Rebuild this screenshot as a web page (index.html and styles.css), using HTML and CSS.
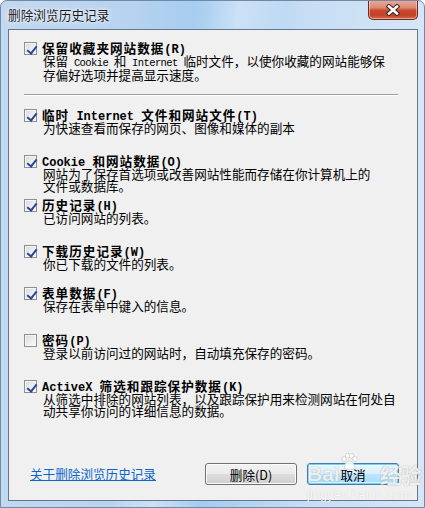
FILE: index.html
```html
<!DOCTYPE html>
<html lang="zh-CN">
<head>
    <meta charset="UTF-8">
    <meta name="viewport" content="width=device-width, initial-scale=1.0">
    <title>删除浏览历史记录</title>
    <link rel="stylesheet" href="styles.css">
</head>
<body>
    <div class="window">
        <!-- 标题栏 -->
        <div class="titlebar">
            <span class="title">删除浏览历史记录</span>
            <button class="close-btn" aria-label="关闭">
                <svg width="16" height="12" viewBox="0 0 16 12">
                    <path d="M4 2.5 L12 9.5 M12 2.5 L4 9.5" stroke="#3a2622" stroke-width="4.6" stroke-linecap="square" fill="none"/>
                    <path d="M4 2.5 L12 9.5 M12 2.5 L4 9.5" stroke="#ffffff" stroke-width="2.6" stroke-linecap="square" fill="none"/>
                </svg>
            </button>
        </div>

        <!-- 内容区 -->
        <div class="client">
            <div class="item item-first">
                <div class="item-head">
                    <span class="check on"></span>
                    <span class="item-title">保留收藏夹网站数据<span class="latin">(R)</span></span>
                </div>
                <p class="item-desc">保留<span class="latin"> Cookie </span>和<span class="latin"> Internet </span>临时文件，以使你收藏的网站能够保<br>存偏好选项并提高显示速度。</p>
            </div>

            <div class="separator"></div>

            <div class="item">
                <div class="item-head">
                    <span class="check on"></span>
                    <span class="item-title">临时<span class="latin"> Internet </span>文件和网站文件<span class="latin">(T)</span></span>
                </div>
                <p class="item-desc">为快速查看而保存的网页、图像和媒体的副本</p>
            </div>

            <div class="item item-cookie">
                <div class="item-head">
                    <span class="check on"></span>
                    <span class="item-title"><span class="latin">Cookie </span>和网站数据<span class="latin">(O)</span></span>
                </div>
                <p class="item-desc">网站为了保存首选项或改善网站性能而存储在你计算机上的<br>文件或数据库。</p>
            </div>

            <div class="item">
                <div class="item-head">
                    <span class="check on"></span>
                    <span class="item-title">历史记录<span class="latin">(H)</span></span>
                </div>
                <p class="item-desc">已访问网站的列表。</p>
            </div>

            <div class="item item-download">
                <div class="item-head">
                    <span class="check on"></span>
                    <span class="item-title">下载历史记录<span class="latin">(W)</span></span>
                </div>
                <p class="item-desc">你已下载的文件的列表。</p>
            </div>

            <div class="item item-form">
                <div class="item-head">
                    <span class="check on"></span>
                    <span class="item-title">表单数据<span class="latin">(F)</span></span>
                </div>
                <p class="item-desc">保存在表单中键入的信息。</p>
            </div>

            <div class="item">
                <div class="item-head">
                    <span class="check"></span>
                    <span class="item-title">密码<span class="latin">(P)</span></span>
                </div>
                <p class="item-desc">登录以前访问过的网站时，自动填充保存的密码。</p>
            </div>

            <div class="item item-last">
                <div class="item-head">
                    <span class="check on"></span>
                    <span class="item-title"><span class="latin">ActiveX </span>筛选和跟踪保护数据<span class="latin">(K)</span></span>
                </div>
                <p class="item-desc">从筛选中排除的网站列表，以及跟踪保护用来检测网站在何处自<br>动共享你访问的详细信息的数据。</p>
            </div>

            <!-- 底部按钮 -->
            <div class="footer">
                <a class="help-link" href="#">关于删除浏览历史记录</a>
                <div class="buttons">
                    <button class="btn">删除(D)</button>
                    <button class="btn btn-default">取消</button>
                </div>
            </div>
        </div>

        <!-- 水印 -->
        <div class="watermark">
            <div class="wm-logo">
                <span class="wm-bai">Bai</span>
                <svg class="wm-paw" width="18" height="18" viewBox="0 0 18 18">
                    <ellipse cx="4" cy="6" rx="2.2" ry="2.8" fill="#fff" stroke="#c9c9c9" stroke-width="0.8"/>
                    <ellipse cx="7.5" cy="2.8" rx="2.2" ry="2.6" fill="#fff" stroke="#c9c9c9" stroke-width="0.8"/>
                    <ellipse cx="11.5" cy="2.8" rx="2.2" ry="2.6" fill="#fff" stroke="#c9c9c9" stroke-width="0.8"/>
                    <ellipse cx="15" cy="6" rx="2.2" ry="2.8" fill="#fff" stroke="#c9c9c9" stroke-width="0.8"/>
                    <path d="M9.5 8 C6 8 4 12 4.5 14.5 C5 17 8 16 9.5 16 C11 16 14 17 14.5 14.5 C15 12 13 8 9.5 8 Z" fill="#fff" stroke="#c9c9c9" stroke-width="0.8"/>
                </svg>
                <span class="wm-jy">经验</span>
            </div>
            <div class="wm-url">jingyan.baidu.com</div>
        </div>
    </div>
</body>
</html>
```

FILE: styles.css
```css
* {
    margin: 0;
    padding: 0;
    box-sizing: border-box;
}

body {
    font-family: "Noto Sans CJK SC", "Noto Sans", sans-serif;
    font-size: 12.6px;
    color: #000000;
    background-color: #FFFFFF;
}

.window {
    position: relative;
    width: 425px;
    height: 508px;
    display: flex;
    flex-direction: column;
    padding: 0 6px 6px 7px;
    border: 1px solid #7189a6;
    border-radius: 7px 7px 0 0;
    overflow: hidden;
    background:
        linear-gradient(100deg, rgba(255, 255, 255, 0) 38%, rgba(255, 255, 255, 0.35) 47%, rgba(255, 255, 255, 0) 56%),
        linear-gradient(90deg, #c2d8ef 0%, #b7d3f0 30%, #a5ccef 48%, #c6ddf4 72%, #d6e6f6 100%);
}

/* 标题栏 */
.titlebar {
    display: flex;
    align-items: flex-start;
    height: 28px;
    flex-shrink: 0;
}

.title {
    padding-top: 6px;
    font-size: 12.7px;
    line-height: 16px;
    color: #1a1a1a;
    text-shadow: 0 0 6px rgba(255, 255, 255, 0.95), 0 0 2px #FFFFFF;
}

.close-btn {
    margin-left: auto;
    margin-top: -1px;
    width: 50px;
    height: 20px;
    display: flex;
    align-items: center;
    justify-content: center;
    border: 1px solid #6e2b1f;
    border-top: none;
    border-radius: 0 0 5px 5px;
    background: linear-gradient(180deg, #e9ab9a 0%, #dc8a74 40%, #c9492f 55%, #c2412a 80%, #d86a4c 100%);
    box-shadow: inset 0 0 0 1px rgba(255, 235, 225, 0.45);
}

/* 内容区 */
.client {
    flex: 1;
    display: flex;
    flex-direction: column;
    padding: 12px 18px 15px 15px;
    border: 1px solid #65778e;
    background-color: #F0F0F0;
}

.item {
    height: 46px;
    flex-shrink: 0;
}

.item-first,
.item-last {
    height: auto;
}

.item-cookie {
    height: 44px;
}

.item-download {
    height: 42px;
}

.item-form {
    height: 47px;
}

.item-head {
    display: flex;
    align-items: center;
    gap: 5px;
    height: 13px;
    line-height: 13px;
}

.item-title {
    font-weight: 700;
    letter-spacing: 1px;
    white-space: nowrap;
}

.item-desc {
    padding-left: 19px;
    line-height: 12px;
    white-space: nowrap;
}

.latin {
    font-family: "Liberation Mono", monospace;
    font-size: 10.5px;
    letter-spacing: -0.6px;
}

.item-title .latin {
    font-size: 12px;
    letter-spacing: 0;
}

.separator {
    height: 2px;
    margin: 13px 1px 13px 0;
    border-top: 1px solid #a0a0a0;
    border-bottom: 1px solid #FFFFFF;
    flex-shrink: 0;
}

/* 复选框 */
.check {
    position: relative;
    width: 13px;
    height: 13px;
    flex-shrink: 0;
    border: 1px solid #8e8f8f;
    background: linear-gradient(135deg, #d8d8d8 0%, #eeeeee 55%, #fbfbfb 100%);
    box-shadow: inset 0 0 0 1px #f6f6f6;
}

.check.on {
    background: linear-gradient(135deg, #d5d9e0 0%, #eceef2 55%, #fbfbfb 100%);
}

.check.on::after {
    content: "";
    position: absolute;
    left: 3.5px;
    top: 0.5px;
    width: 4px;
    height: 8px;
    border: solid #2c4493;
    border-width: 0 2px 2px 0;
    transform: rotate(38deg);
}

/* 底部 */
.footer {
    margin-top: auto;
    display: flex;
    align-items: center;
    height: 22px;
}

.help-link {
    margin-left: 6px;
    color: #0a66cc;
    text-decoration: underline;
    line-height: 14px;
}

.buttons {
    margin-left: auto;
    display: flex;
    gap: 10px;
}

.btn {
    width: 92px;
    height: 22px;
    font: inherit;
    color: #000000;
    border: 1px solid #707070;
    border-radius: 3px;
    background: linear-gradient(180deg, #f2f2f2 0%, #ebebeb 48%, #dddddd 52%, #cfcfcf 100%);
    box-shadow: inset 0 0 0 1px #fcfcfc;
}

.btn-default {
    border-color: #3c7fb1;
    background: linear-gradient(180deg, #eaf6fd 0%, #d9f0fc 48%, #bee6fd 52%, #a7d9f5 100%);
    box-shadow: inset 0 0 0 1px #6fd3f7, inset 0 0 0 2px rgba(255, 255, 255, 0.6);
}

/* 水印 */
.watermark {
    position: absolute;
    left: 306px;
    top: 452px;
    pointer-events: none;
}

.wm-logo {
    display: flex;
    align-items: flex-end;
    height: 32px;
}

.wm-bai,
.wm-jy {
    font-size: 21px;
    line-height: 22px;
    font-weight: 700;
    color: rgba(255, 255, 255, 0.85);
    text-shadow: 0 0 1px rgba(90, 90, 90, 0.6);
}

.wm-bai {
    font-family: "Liberation Sans", sans-serif;
}

.wm-paw {
    align-self: flex-start;
    margin: 0 22px 0 0;
    opacity: 0.85;
}

.wm-url {
    margin-top: 3px;
    font-family: "Liberation Sans", sans-serif;
    font-size: 12px;
    letter-spacing: 0.4px;
    color: rgba(255, 255, 255, 0.9);
    text-shadow: 0 0 1px rgba(120, 120, 120, 0.35);
}
```
